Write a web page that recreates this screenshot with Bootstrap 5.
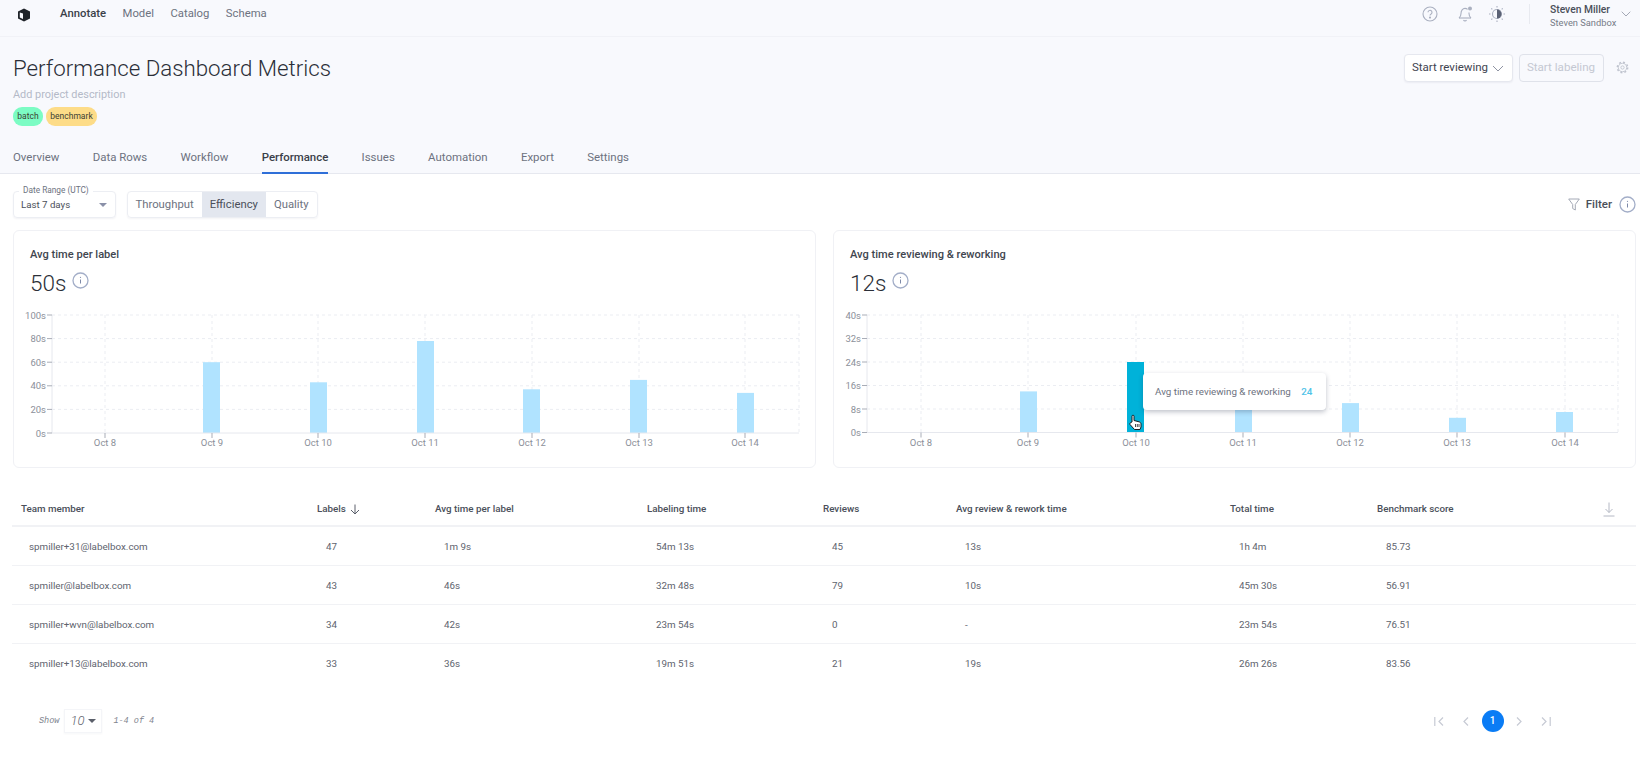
<!DOCTYPE html>
<html lang="en">
<head>
<meta charset="utf-8">
<title>Performance Dashboard Metrics</title>
<link rel="stylesheet" href="https://cdn.jsdelivr.net/npm/bootstrap@5.3.0/dist/css/bootstrap.min.css">
<style>
html,body{height:764px;overflow:hidden;}
body{font-family:"Roboto","Liberation Sans",sans-serif;background:#fff;color:#41464f;font-size:12px;}
.top-zone{background:#f8f9fd;border-bottom:1px solid #e6e8ef;height:174px;}
.app-nav{height:37px;padding:0 9px 0 17px;border-bottom:1px solid #f1f2f7;}
.app-nav .logo-wrap{width:43px;margin-bottom:7px;}
.app-links{gap:16.500px;font-size:11.300px;color:#6d7280;margin-bottom:7px;}
.app-links .on{color:#3a3f49;font-weight:500;}
.nav-tools{gap:15px;margin-bottom:9px;}
.bell-ico{margin:0 -1.500px 0 3.500px;}
.vbar{width:1px;height:20px;background:#e8eaf0;margin:0 0 0 8px;}
.who{margin:4px 0 0 5px;line-height:13px;width:56px;}
.who b{display:block;font-size:10.300px;font-weight:500;color:#4a4f5a;white-space:nowrap;}
.who span{display:block;font-size:9.300px;color:#767b87;white-space:nowrap;}
.head-row{padding:0 11px 0 13px;}
.page-title{font-size:22.300px;font-weight:300;color:#2b2f38;margin:16px 0 0;line-height:30px;}
.page-desc{font-size:10.900px;color:#b4b9c8;margin-top:4px;line-height:15px;}
.tag-pill{display:inline-block;height:19px;line-height:19px;border-radius:9px;font-size:8.500px;padding:0 2px;color:#3c3f33;text-align:center;}
.tag-a{background:#7cfcc4;width:30px;}
.tag-b{background:#fddc88;width:51px;}
.tag-row{gap:3px;margin-top:5px;}
.btn-review{height:28px;width:109px;padding:0;font-size:11.500px;color:#3f4450;background:#fff;border:1px solid #e6e8ef;border-radius:4px;box-shadow:0 1px 2px rgba(30,40,80,.06);}
.btn-label{height:28px;width:85px;padding:0;font-size:11.600px;color:#c4c8d2;background:#f8f9fd;border:1px solid #dfe2ea;border-radius:4px;}
.head-actions{gap:6px;margin-top:17px;}
.gear-ico{margin:7px 0 0 6.500px;}
.zone-wrap{height:137px;}
.tab-strip{gap:33.300px;padding:0 13px;height:38px;font-size:11.450px;color:#6d7280;}
.tab-item{height:38px;line-height:43px;}
.tab-item.on{color:#3a3f49;font-weight:500;border-bottom:2px solid #2f6fd8;}
.ctrl-row{padding:17px 4px 0 13px;height:56px;}
.range-box{position:relative;width:103px;height:27px;border:1px solid #eceef3;border-radius:4px;box-shadow:0 1px 2px rgba(30,40,80,.06);padding:0 8px 0 7px;font-size:9.700px;line-height:28px;color:#4a4f5a;}
.range-cap{position:absolute;top:-7px;left:5px;background:#fff;padding:0 4px;font-size:8.300px;line-height:11px;color:#6d7280;}
.caret-down{width:0;height:0;border-left:4px solid transparent;border-right:4px solid transparent;border-top:4px solid #8a90a8;}
.seg-box{margin-left:10.500px;height:27px;border:1px solid #eceef3;border-radius:4px;overflow:hidden;font-size:11.300px;line-height:26px;color:#6d7280;box-shadow:0 1px 2px rgba(30,40,80,.05);}
.seg-box span{padding:0 8px;}
.seg-box .on{background:#e3e7ef;color:#4a4f5a;}
.filter-txt{font-size:11.500px;font-weight:500;color:#4a4f5a;margin:0 7px 0 6px;}
.chart-grid{display:grid;grid-template-columns:803px 803px;gap:17px;padding:0 13px;}
.chart-card{position:relative;height:238px;border:1px solid #f0f1f5;border-radius:6px;background:#fff;padding:16px 0 0 16px;}
.chart-title{font-size:11.100px;font-weight:500;color:#41464f;line-height:16px;}
.chart-head{gap:6px;}
.chart-num{font-size:22.500px;font-weight:300;color:#2b2f38;line-height:30px;margin-top:5px;}
.info-ico{margin-top:9px;}
.chart-svg{display:block;margin:7px 0 0 -16px;}
.chart-svg text{font-family:"Roboto","Liberation Sans",sans-serif;font-size:9.500px;fill:#8b8f99;}
.tip-box{position:absolute;left:309px;top:142px;width:183px;height:37px;background:#fff;border-radius:4px;box-shadow:0 2px 5px rgba(30,40,70,.28);padding:0 12px;font-size:9.800px;line-height:37px;color:#6d7280;white-space:nowrap;}
.tip-box b{font-weight:500;color:#4fc3e8;}
.hand{position:absolute;left:295px;top:183px;}
.perf-table-wrap{padding:0 4px 0 12px;margin-top:20px;}
.perf-table{table-layout:fixed;width:1624px;margin:0;color:#60646e;font-size:9.800px;}
.perf-table th{height:38px;padding:6px 0 0 8px;border-bottom:2px solid #f1f2f5;font-weight:500;font-size:9.800px;color:#4a4f5a;vertical-align:middle;}
.perf-table th:first-child{padding-left:9px;}
.sort-ico{margin-left:2px;}
.perf-table td{height:39.300px;padding:2px 0 0 17px;border-bottom:1px solid #f1f2f5;vertical-align:middle;}
.perf-table tr:last-child td{border-bottom:0;}
.pager-row{padding:26px 81px 0 39px;}
.pg-show{font-family:"Liberation Mono",monospace;font-style:italic;font-size:8.500px;color:#80848e;}
.pg-size{width:38px;height:24px;margin:0 11px 0 5px;border:1px solid #f4f5f8;box-shadow:0 1px 2px rgba(30,40,80,.04);font-family:"Roboto",sans-serif;font-weight:300;font-style:italic;font-size:13px;color:#5e636e;gap:4px;}
.pg-size .caret-down{border-top-color:#5a5f6a;}
.pg-ico{width:26.500px;display:flex;justify-content:center;}
.pg-now{width:22px;height:22px;margin:0 2.500px;border-radius:50%;background:#0a7cf5;color:#fff;font-size:10px;font-weight:500;line-height:22px;text-align:center;}
</style>
</head>
<body>
<div class="top-zone">
  <div class="app-nav d-flex align-items-center">
    <div class="logo-wrap">
      <svg width="14" height="14" viewBox="0 0 14 14"><path d="M7 .5 13 3.500V10.500L7 13.500 1 10.500V3.500Z" fill="#1f2329"/><path d="M2.800 4.600 6 5.600V11L2.800 9.600Z" fill="#f8f9fd"/></svg>
    </div>
    <div class="app-links d-flex"><span class="on">Annotate</span><span>Model</span><span>Catalog</span><span>Schema</span></div>
    <div class="ms-auto d-flex align-items-center nav-tools">
      <svg width="16" height="16" viewBox="0 0 16 16" fill="none" stroke="#aab0c0" stroke-width="1.100"><circle cx="8" cy="8" r="7"/><path d="M6 6.300a2 2 0 1 1 3.100 1.700c-.7.4-1.100.8-1.100 1.600"/><circle cx="8" cy="11.600" r=".5" fill="#aab0c0"/></svg>
      <svg class="bell-ico" width="18" height="18" viewBox="0 0 18 18" fill="none" stroke="#aab0c0" stroke-width="1.100"><path d="M2 13c1.400-1.100 2-2.200 2-4.500C4 5.600 5.700 3.400 8 3.400c1 0 1.900.4 2.600 1M12 7.500c0 .3 0 .7 0 1 0 2.300.6 3.400 2 4.500"/><path d="M2 13H14"/><path d="M6.500 15a1.700 1.700 0 0 0 3 0"/><circle cx="13" cy="3.500" r="2" fill="#aab0c0" stroke="none"/></svg>
      <svg width="18" height="18" viewBox="0 0 18 18" fill="none" stroke="#aab0c0" stroke-width="1.100"><circle cx="9" cy="9" r="4.500"/><path d="M9 4.500a4.500 4.500 0 0 1 0 9Z" fill="#5b6275" stroke="none"/><path d="M9 1v1.500M9 15.500V17M1 9h1.500M15.500 9H17M3.300 3.300l1 1M13.700 13.700l1 1M3.300 14.700l1-1M13.700 4.300l1-1"/></svg>
      <div class="vbar"></div>
      <div class="who"><b>Steven Miller</b><span>Steven Sandbox</span></div>
      <svg width="10" height="6" viewBox="0 0 10 6" fill="none" stroke="#a4a9b6" stroke-width="1"><path d="M.7.7 5 5 9.300.7"/></svg>
    </div>
  </div>
  <div class="zone-wrap d-flex flex-column">
    <div class="head-row d-flex justify-content-between">
      <div>
        <h1 class="page-title">Performance Dashboard Metrics</h1>
        <div class="page-desc">Add project description</div>
        <div class="d-flex tag-row"><span class="tag-pill tag-a">batch</span><span class="tag-pill tag-b">benchmark</span></div>
      </div>
      <div class="d-flex align-items-start head-actions">
        <button type="button" class="btn btn-review d-inline-flex align-items-center justify-content-center gap-1">Start reviewing <svg width="12" height="7" viewBox="0 0 12 7" fill="none" stroke="#8f94a3"><path d="M1 1 6 6 11 1"/></svg></button>
        <button type="button" class="btn btn-label">Start labeling</button>
        <svg class="gear-ico" width="13" height="13" viewBox="0 0 16 16" fill="none" stroke="#bfc3ce"><circle cx="8" cy="8" r="2" stroke-width="1.100"/><circle cx="8" cy="8" r="5.200" stroke-width="1.100"/><circle cx="8" cy="8" r="6.400" stroke-width="1.800" stroke-dasharray="2.400 2.620"/></svg>
      </div>
    </div>
    <div class="tab-strip d-flex mt-auto">
      <span class="tab-item">Overview</span><span class="tab-item">Data Rows</span><span class="tab-item">Workflow</span><span class="tab-item on">Performance</span><span class="tab-item">Issues</span><span class="tab-item">Automation</span><span class="tab-item">Export</span><span class="tab-item">Settings</span>
    </div>
  </div>
</div>

<div class="ctrl-row d-flex align-items-start">
  <div class="range-box d-flex align-items-center justify-content-between"><span class="range-cap">Date Range (UTC)</span><span>Last 7 days</span><span class="caret-down"></span></div>
  <div class="seg-box d-flex"><span>Throughput</span><span class="on">Efficiency</span><span>Quality</span></div>
  <div class="ms-auto d-flex align-items-center" style="height:27px">
    <svg width="12" height="13" viewBox="0 0 12 13" fill="none" stroke="#a4a9b6"><path d="M.7 1h10.600L7.300 6.500V12L4.700 10.500v-4Z"/></svg>
    <span class="filter-txt">Filter</span>
    <svg width="17" height="17" viewBox="0 0 17 17" fill="none" stroke="#a3aec8" stroke-width="1.300"><circle cx="8.500" cy="8.500" r="7.500"/><path d="M8.500 7.500v4" stroke="#7d89a8" stroke-width="1"/><circle cx="8.500" cy="5.300" r=".6" fill="#7d89a8" stroke="none"/></svg>
  </div>
</div>

<div class="chart-grid">
  <div class="chart-card">
    <div class="chart-title">Avg time per label</div>
    <div class="d-flex align-items-start chart-head"><div class="chart-num">50s</div><svg class="info-ico" width="17" height="17" viewBox="0 0 17 17" fill="none" stroke="#a3aec8" stroke-width="1.300"><circle cx="8.500" cy="8.500" r="7.500"/><path d="M8.500 7.500v4" stroke="#7d89a8" stroke-width="1"/><circle cx="8.500" cy="5.300" r=".6" fill="#7d89a8" stroke="none"/></svg></div>
    <svg class="chart-svg" width="801" height="150" viewBox="14 305 801 150">
      <g stroke="#ebedf2" stroke-dasharray="3 3" fill="none">
        <path d="M52 315H799M52 338.600H799M52 362.200H799M52 385.800H799M52 409.400H799"/>
        <path d="M105 315V433M212 315V433M318 315V433M425 315V433M532 315V433M639 315V433M745 315V433M799 315V433"/>
      </g>
      <g fill="#b0e3ff">
        <rect x="203" y="362.200" width="17" height="70.800"/><rect x="310" y="382.300" width="17" height="50.700"/><rect x="417" y="341" width="17" height="92"/><rect x="523" y="389.300" width="17" height="43.700"/><rect x="630" y="379.900" width="17" height="53.100"/><rect x="737" y="392.900" width="17" height="40.100"/>
      </g>
      <path d="M52 315V433H799" stroke="#e6e8ee" fill="none"/>
      <path d="M47 315H52M47 338.600H52M47 362.200H52M47 385.800H52M47 409.400H52M47 433H52M105 433v5M212 433v5M318 433v5M425 433v5M532 433v5M639 433v5M745 433v5" stroke="#a9adb7" fill="none"/>
      <g text-anchor="end"><text x="46" y="318.500">100s</text><text x="46" y="342">80s</text><text x="46" y="365.500">60s</text><text x="46" y="389">40s</text><text x="46" y="413">20s</text><text x="46" y="436.500">0s</text></g>
      <g text-anchor="middle"><text x="105" y="446">Oct 8</text><text x="212" y="446">Oct 9</text><text x="318" y="446">Oct 10</text><text x="425" y="446">Oct 11</text><text x="532" y="446">Oct 12</text><text x="639" y="446">Oct 13</text><text x="745" y="446">Oct 14</text></g>
    </svg>
  </div>
  <div class="chart-card">
    <div class="chart-title">Avg time reviewing &amp; reworking</div>
    <div class="d-flex align-items-start chart-head"><div class="chart-num">12s</div><svg class="info-ico" width="17" height="17" viewBox="0 0 17 17" fill="none" stroke="#a3aec8" stroke-width="1.300"><circle cx="8.500" cy="8.500" r="7.500"/><path d="M8.500 7.500v4" stroke="#7d89a8" stroke-width="1"/><circle cx="8.500" cy="5.300" r=".6" fill="#7d89a8" stroke="none"/></svg></div>
    <svg class="chart-svg" width="801" height="150" viewBox="834 305 801 150">
      <g stroke="#ebedf2" stroke-dasharray="3 3" fill="none">
        <path d="M867 315H1618M867 338.500H1618M867 362H1618M867 385.500H1618M867 409H1618"/>
        <path d="M921 315V432.500M1028 315V432.500M1136 315V432.500M1243 315V432.500M1350 315V432.500M1457 315V432.500M1565 315V432.500M1618 315V432.500"/>
      </g>
      <g fill="#b0e3ff">
        <rect x="1020" y="391.400" width="17" height="41.100"/><rect x="1235" y="391.400" width="17" height="41.100"/><rect x="1342" y="403.100" width="17" height="29.400"/><rect x="1449" y="417.800" width="17" height="14.700"/><rect x="1556" y="412" width="17" height="20.500"/>
      </g>
      <rect x="1127" y="362" width="17" height="70.500" fill="#00b2d9"/>
      <path d="M867 315V432.500H1618" stroke="#e6e8ee" fill="none"/>
      <path d="M862 315H867M862 338.500H867M862 362H867M862 385.500H867M862 409H867M862 432.500H867M921 432.500v5M1028 432.500v5M1136 432.500v5M1243 432.500v5M1350 432.500v5M1457 432.500v5M1565 432.500v5" stroke="#a9adb7" fill="none"/>
      <g text-anchor="end"><text x="861" y="318.500">40s</text><text x="861" y="342">32s</text><text x="861" y="365.500">24s</text><text x="861" y="389">16s</text><text x="861" y="412.500">8s</text><text x="861" y="436">0s</text></g>
      <g text-anchor="middle"><text x="921" y="446">Oct 8</text><text x="1028" y="446">Oct 9</text><text x="1136" y="446">Oct 10</text><text x="1243" y="446">Oct 11</text><text x="1350" y="446">Oct 12</text><text x="1457" y="446">Oct 13</text><text x="1565" y="446">Oct 14</text></g>
    </svg>
    <div class="tip-box">Avg time reviewing &amp; reworking <b class="ms-2">24</b></div>
    <svg class="hand" width="13" height="16" viewBox="0 0 13 16"><path d="M3 8V2.200a1 1 0 0 1 2 0V6.500l5 1.300c1.200.4 2 1 2 2.200V13l-1 2.500H5.500L1 10.500c-.7-1 .6-2.200 2-2.500Z" fill="#fff" stroke="#1a1c20" stroke-width="1"/><path d="M6.500 10v3M8.300 10v3M10 10v3" stroke="#1a1c20" stroke-width=".8"/></svg>
  </div>
</div>

<div class="perf-table-wrap">
  <table class="table perf-table">
    <colgroup><col style="width:297px"><col style="width:118px"><col style="width:212px"><col style="width:176px"><col style="width:133px"><col style="width:274px"><col style="width:147px"><col style="width:267px"></colgroup>
    <thead><tr><th>Team member</th><th>Labels <svg class="sort-ico" width="10" height="11" viewBox="0 0 10 11" fill="none" stroke="#5a5f6a"><path d="M5 .5V10M1 6l4 4 4-4"/></svg></th><th>Avg time per label</th><th>Labeling time</th><th>Reviews</th><th>Avg review &amp; rework time</th><th>Total time</th><th><div class="d-flex justify-content-between align-items-center" style="padding-right:21px"><span>Benchmark score</span><svg width="12" height="15" viewBox="0 0 12 15" fill="none" stroke="#b4b8c4"><path d="M6 .5V10.500M2.500 7 6 10.500 9.500 7M.5 14h11"/></svg></div></th></tr></thead>
    <tbody>
      <tr><td>spmiller+31@labelbox.com</td><td>47</td><td>1m 9s</td><td>54m 13s</td><td>45</td><td>13s</td><td>1h 4m</td><td>85.73</td></tr>
      <tr><td>spmiller@labelbox.com</td><td>43</td><td>46s</td><td>32m 48s</td><td>79</td><td>10s</td><td>45m 30s</td><td>56.91</td></tr>
      <tr><td>spmiller+wvn@labelbox.com</td><td>34</td><td>42s</td><td>23m 54s</td><td>0</td><td>-</td><td>23m 54s</td><td>76.51</td></tr>
      <tr><td>spmiller+13@labelbox.com</td><td>33</td><td>36s</td><td>19m 51s</td><td>21</td><td>19s</td><td>26m 26s</td><td>83.56</td></tr>
    </tbody>
  </table>
</div>

<div class="pager-row d-flex align-items-center justify-content-between">
  <div class="d-flex align-items-center pg-show"><span>Show</span><span class="pg-size d-flex align-items-center justify-content-center">10<span class="caret-down"></span></span><span>1-4 of 4</span></div>
  <div class="d-flex align-items-center">
    <span class="pg-ico"><svg width="11" height="9" viewBox="0 0 11 9" fill="none" stroke="#c6cad4" stroke-width="1.200"><path d="M.8 0V9M9 .5 5 4.500 9 8.500"/></svg></span>
    <span class="pg-ico"><svg width="6" height="9" viewBox="0 0 6 9" fill="none" stroke="#c6cad4" stroke-width="1.200"><path d="M5 .5 1 4.500 5 8.500"/></svg></span>
    <span class="pg-now">1</span>
    <span class="pg-ico"><svg width="6" height="9" viewBox="0 0 6 9" fill="none" stroke="#c6cad4" stroke-width="1.200"><path d="M1 .5 5 4.500 1 8.500"/></svg></span>
    <span class="pg-ico"><svg width="11" height="9" viewBox="0 0 11 9" fill="none" stroke="#c6cad4" stroke-width="1.200"><path d="M10.200 0V9M2 .5 6 4.500 2 8.500"/></svg></span>
  </div>
</div>
<script src="https://cdn.jsdelivr.net/npm/bootstrap@5.3.0/dist/js/bootstrap.bundle.min.js"></script>
</body>
</html>
